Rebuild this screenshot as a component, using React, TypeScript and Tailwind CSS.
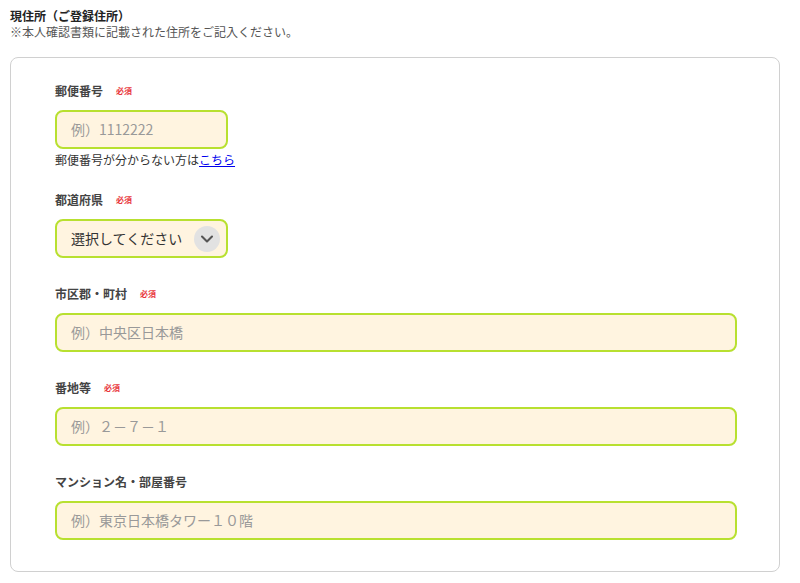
import { ChevronDown } from 'lucide-react';

const font = { fontFamily: '"Noto Sans CJK JP", "Noto Sans", sans-serif' };

function Required() {
    return <span className="ml-[13px] text-[8px] font-bold text-[#e8343a] leading-none">必須</span>;
}

function Label({ text, required }: { text: string; required?: boolean }) {
    return (
        <div className="flex items-center h-[14px] text-[12px] font-bold text-[#444] leading-none">
            {text}
            {required && <Required />}
        </div>
    );
}

function TextInput({ placeholder, wide }: { placeholder: string; wide?: boolean }) {
    return (
        <div
            className={`${wide ? 'w-[682px]' : 'w-[173px]'} h-[39px] mt-[12px] flex items-center px-[14px] rounded-[8px] border-2 border-[#b8e030] bg-[#fff4e0] text-[14px] text-[#999]`}
        >
            {placeholder}
        </div>
    );
}

export default function App() {
    return (
        <div className="bg-white w-[800px] h-[583px] px-[10px] pt-[8px] text-[#333]" style={font}>
            <div className="text-[12px] font-bold leading-[16px] text-[#222]">現住所（ご登録住所）</div>
            <div className="text-[12px] leading-[16px] text-[#555]">※本人確認書類に記載された住所をご記入ください。</div>

            <div className="mt-[17px] w-[770px] h-[515px] rounded-[8px] border border-[#d0d0d0] pl-[44px] pt-[26px]">
                {/* 郵便番号 */}
                <Label text="郵便番号" required />
                <TextInput placeholder="例）1112222" />
                <div className="mt-[3px] text-[12px] leading-[16px] text-[#333]">
                    郵便番号が分からない方は<span className="text-[#0000ee] underline">こちら</span>
                </div>

                {/* 都道府県 */}
                <div className="mt-[25px]">
                    <Label text="都道府県" required />
                    <div className="w-[173px] h-[39px] mt-[12px] flex items-center justify-between pl-[14px] pr-[6px] rounded-[8px] border-2 border-[#b8e030] bg-[#fff4e0]">
                        <span className="text-[14px] text-[#333]">選択してください</span>
                        <span className="w-[26px] h-[26px] rounded-full bg-[#e2e2e2] flex items-center justify-center">
                            <ChevronDown size={20} strokeWidth={2.5} className="text-[#555] mt-[1px]" />
                        </span>
                    </div>
                </div>

                <div className="mt-[29px]">
                    <Label text="市区郡・町村" required />
                    <TextInput placeholder="例）中央区日本橋" wide />
                </div>

                <div className="mt-[29px]">
                    <Label text="番地等" required />
                    <TextInput placeholder="例）２－７－１" wide />
                </div>

                <div className="mt-[29px]">
                    <Label text="マンション名・部屋番号" />
                    <TextInput placeholder="例）東京日本橋タワー１０階" wide />
                </div>
            </div>
        </div>
    );
}
